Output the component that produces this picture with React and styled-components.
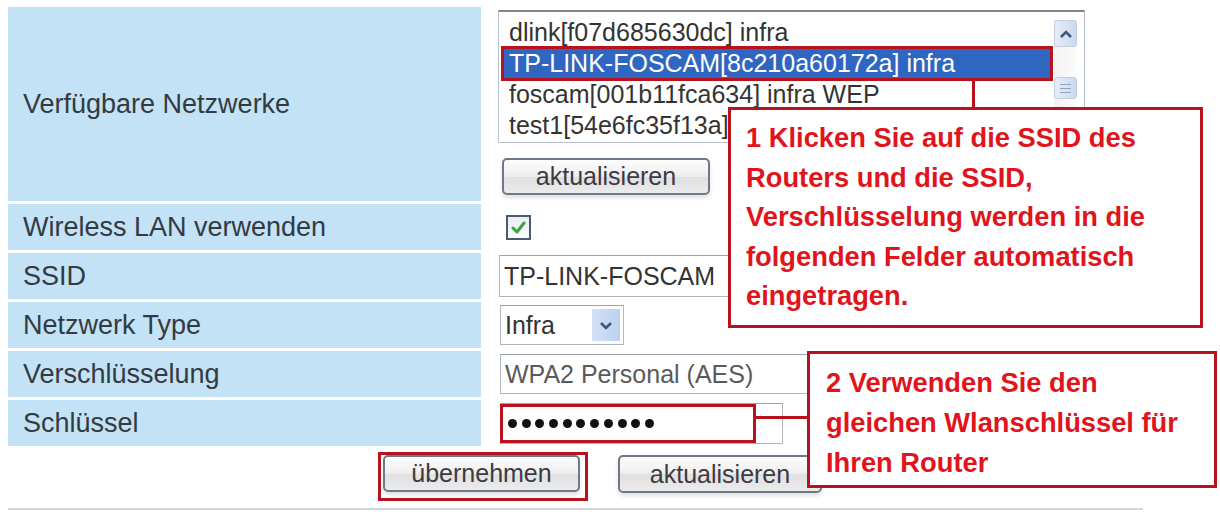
import React from "react"
import styled, { createGlobalStyle } from "styled-components"

const GlobalStyle = createGlobalStyle`
  body {
    margin: 0;
    background: #fff;
    font-family: "Liberation Sans", Arial, sans-serif;
  }
`

const RED_LINE = "#b9121f"
const RED_TEXT = "#e1141c"

const Page = styled.div`
  position: relative;
  width: 1220px;
  height: 512px;
  overflow: hidden;
  box-sizing: border-box;
  padding: 7px 0 0 8px;
  background: #fff;
`

const FormGrid = styled.div`
  display: grid;
  grid-template-columns: 473px 1fr;
  row-gap: 3px;
`

const Label = styled.div`
  display: flex;
  align-items: center;
  height: ${props => props.$h || 46}px;
  padding-left: 15px;
  background: #c3e2f5;
  color: #333a42;
  font-size: 27px;
`

const Field = styled.div`
  display: flex;
  flex-direction: ${props => (props.$column ? "column" : "row")};
  align-items: ${props => (props.$column ? "flex-start" : "center")};
  padding-left: 17px;
`

const ListBox = styled.div`
  display: flex;
  margin-top: 3px;
  width: 587px;
  height: 133px;
  box-sizing: border-box;
  border: 1px solid #b8c2cc;
  border-top: 2px solid #7d868f;
  background: #fff;
`

const Items = styled.div`
  flex: 1;
  padding: 5px 0 0 4px;
`

const Item = styled.div`
  height: 31px;
  line-height: 31px;
  padding-left: 6px;
  font-size: 25px;
  white-space: nowrap;
  color: ${props => (props.$selected ? "#fff" : "#333")};
  background: ${props => (props.$selected ? "#2f66c2" : "transparent")};
  outline: ${props => (props.$selected ? `3px solid ${RED_LINE}` : "none")};
  outline-offset: -1px;
`

const Scrollbar = styled.div`
  display: flex;
  flex-direction: column;
  width: 23px;
  margin: 8px 7px 4px 3px;
  background: linear-gradient(to right, #f2f2f2, #fbfbfb);
`

const ScrollButton = styled.div`
  display: flex;
  align-items: center;
  justify-content: center;
  height: 27px;
  border: 1px solid #c3cfdf;
  border-radius: 3px;
  box-sizing: border-box;
  background: linear-gradient(to right, #e6edf8, #cbd9ee);
`

const ScrollThumb = styled(ScrollButton)`
  height: 22px;
  margin-top: 30px;
  flex-direction: column;
  gap: 3px;

  span {
    display: block;
    width: 11px;
    height: 1px;
    background: #8ea3c4;
  }
`

const Button = styled.button`
  width: ${props => props.$w}px;
  height: ${props => props.$h || 37}px;
  margin-top: ${props => props.$mt || 0}px;
  margin-left: ${props => props.$ml || 0}px;
  padding: 0;
  border: 2px solid #6d7986;
  border-radius: 5px;
  background: linear-gradient(#fdfdfd, #eeeeee 50%, #e0e0e0 51%, #ebebeb);
  box-shadow: 0 3px 4px rgba(0, 0, 0, 0.12);
  color: #3d3a44;
  font-family: "Liberation Sans", Arial, sans-serif;
  font-size: 25px;
`

const CheckBox = styled.div`
  display: flex;
  align-items: center;
  justify-content: center;
  width: 25px;
  height: 25px;
  margin-left: 8px;
  box-sizing: border-box;
  border: 2px solid #4b5a6e;
  background: linear-gradient(#e9eef3, #fbfcfd);
`

const TextBox = styled.div`
  position: relative;
  display: flex;
  align-items: center;
  width: ${props => props.$w}px;
  height: ${props => props.$h || 42}px;
  margin-left: ${props => props.$ml || 1}px;
  box-sizing: border-box;
  padding-left: 4px;
  border: 1px solid #b1b7bf;
  border-top-color: #9ba2ab;
  background: #fff;
  color: ${props => (props.$muted ? "#5a5a5a" : "#333")};
  font-size: 25px;
  white-space: nowrap;
`

const SelectArrow = styled.div`
  position: absolute;
  top: 3px;
  right: 3px;
  bottom: 3px;
  width: 28px;
  display: flex;
  align-items: center;
  justify-content: center;
  background: linear-gradient(to right, #d4e1f4, #bcd0ef);
`

const Dots = styled.span`
  display: flex;
  gap: 4.7px;
  padding-left: 3px;

  i {
    display: block;
    width: 9px;
    height: 9px;
    border-radius: 50%;
    background: #111;
  }
`

const RedFrame = styled.div`
  position: absolute;
  left: -1px;
  top: 0;
  width: 256px;
  height: 39px;
  box-sizing: border-box;
  border: 3px solid ${RED_LINE};
`

const ActionRow = styled.div`
  display: flex;
  align-items: flex-start;
  gap: 30px;
  margin-top: 6px;
  padding-left: 370px;
`

const Highlight = styled.div`
  display: flex;
  padding: 0 5px 6px 2px;
  border: 3px solid ${RED_LINE};
`

const BottomRule = styled.div`
  width: 1135px;
  height: 2px;
  margin-top: 7px;
  background: #d6d6d6;
`

const Callout = styled.div`
  position: absolute;
  left: ${props => props.$x}px;
  top: ${props => props.$y}px;
  width: ${props => props.$w}px;
  height: ${props => props.$h}px;
  box-sizing: border-box;
  padding: ${props => props.$pad};
  border: 3px solid ${RED_LINE};
  background: #fff;
  color: ${RED_TEXT};
  font-size: 27.3px;
  font-weight: bold;
  line-height: ${props => props.$lh}px;
  white-space: nowrap;
`

const Connector = styled.div`
  position: absolute;
  left: ${props => props.$x}px;
  top: ${props => props.$y}px;
  width: ${props => props.$w}px;
  height: ${props => props.$h}px;
  background: ${RED_LINE};
`

const Chevron = ({ up }) => (
  <svg width="14" height="10" viewBox="0 0 14 10">
    <path
      d={up ? "M2 8 L7 3 L12 8" : "M2 3 L7 8 L12 3"}
      fill="none"
      stroke="#3f5680"
      strokeWidth="2.6"
    />
  </svg>
)

const Check = () => (
  <svg width="15" height="13" viewBox="0 0 15 13">
    <path
      d="M2 7 L6 11 L13 2"
      fill="none"
      stroke="#3fa33a"
      strokeWidth="3"
      strokeLinecap="round"
      strokeLinejoin="round"
    />
  </svg>
)

// last entry is cut off by the first callout in the screenshot
const networks = [
  "dlink[f07d685630dc] infra",
  "TP-LINK-FOSCAM[8c210a60172a] infra",
  "foscam[001b11fca634] infra WEP",
  "test1[54e6fc35f13a]",
]

const App = () => (
  <>
    <GlobalStyle />
    <Page>
      <FormGrid>
        <Label $h={194}>Verfügbare Netzwerke</Label>
        <Field $column>
          <ListBox>
            <Items>
              {networks.map((n, i) => (
                <Item key={n} $selected={i === 1}>
                  {n}
                </Item>
              ))}
            </Items>
            <Scrollbar>
              <ScrollButton>
                <Chevron up />
              </ScrollButton>
              <ScrollThumb>
                <span />
                <span />
                <span />
              </ScrollThumb>
            </Scrollbar>
          </ListBox>
          <Button $w={208} $mt={15} $ml={4}>
            aktualisieren
          </Button>
        </Field>

        <Label>Wireless LAN verwenden</Label>
        <Field>
          <CheckBox>
            <Check />
          </CheckBox>
        </Field>

        <Label>SSID</Label>
        <Field>
          <TextBox $w={330}>TP-LINK-FOSCAM</TextBox>
        </Field>

        <Label>Netzwerk Type</Label>
        <Field>
          <TextBox $w={124} $h={40} $ml={2}>
            Infra
            <SelectArrow>
              <Chevron />
            </SelectArrow>
          </TextBox>
        </Field>

        <Label>Verschlüsselung</Label>
        <Field>
          <TextBox $w={340} $h={40} $ml={2} $muted>
            WPA2 Personal (AES)
          </TextBox>
        </Field>

        <Label>Schlüssel</Label>
        <Field>
          <TextBox $w={283} $h={41} $ml={2}>
            <Dots>
              {Array.from({ length: 11 }).map((_, i) => (
                <i key={i} />
              ))}
            </Dots>
            <RedFrame />
          </TextBox>
        </Field>
      </FormGrid>

      <ActionRow>
        <Highlight>
          <Button $w={197}>übernehmen</Button>
        </Highlight>
        <Button $w={204} $h={38} $mt={3}>
          aktualisieren
        </Button>
      </ActionRow>
      <BottomRule />

      <Connector $x={972} $y={81} $w={3} $h={27} />
      <Callout $x={728} $y={107} $w={475} $h={221} $lh={39.5} $pad="8px 0 0 15px">
        1 Klicken Sie auf die SSID des
        <br />
        Routers und die SSID,
        <br />
        Verschlüsselung werden in die
        <br />
        folgenden Felder automatisch
        <br />
        eingetragen.
      </Callout>

      <Connector $x={755} $y={416} $w={53} $h={3} />
      <Callout $x={807} $y={351} $w={410} $h={137} $lh={40} $pad="9px 0 0 16px">
        2 Verwenden Sie den
        <br />
        gleichen Wlanschlüssel für
        <br />
        Ihren Router
      </Callout>
    </Page>
  </>
)

export default App
